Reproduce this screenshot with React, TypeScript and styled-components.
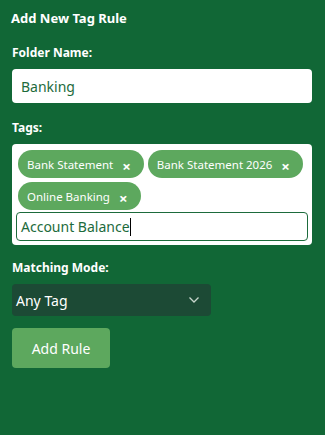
import * as React from 'react';
import styled, { createGlobalStyle } from 'styled-components';

const GlobalStyle = createGlobalStyle`
    html, body {
        margin: 0;
        padding: 0;
        background: #116736;
        font-family: "Noto Sans", "Open Sans", sans-serif;
    }
`;

const Panel = styled.div`
    width: 325px;
    height: 435px;
    box-sizing: border-box;
    padding: 9px 12px;
    background: #116736;
    color: #fff;
`;

const Title = styled.h3`
    margin: 0 0 18px -1px;
    font-size: 13px;
    font-weight: 700;
    line-height: 18px;
`;

const Label = styled.label`
    display: block;
    font-size: 12px;
    font-weight: 700;
    line-height: 16px;
    margin-bottom: 8px;
`;

const Field = styled.div<{ $gap?: number }>`
    margin-bottom: ${({ $gap }) => ($gap ?? 16)}px;
`;

const TextInput = styled.input`
    display: block;
    width: 300px;
    height: 34px;
    box-sizing: border-box;
    border: none;
    border-radius: 4px;
    padding: 0 9px;
    font-family: inherit;
    font-size: 14px;
    color: #1d6b3c;
    background: #fff;
    outline: none;
`;

const TagBox = styled.div`
    width: 300px;
    box-sizing: border-box;
    background: #fff;
    border-radius: 4px;
    padding: 6px 4px 4px 4px;
    display: flex;
    flex-wrap: wrap;
    column-gap: 2px;
    row-gap: 4px;
`;

const Chip = styled.span`
    display: inline-flex;
    align-items: center;
    height: 28px;
    box-sizing: border-box;
    margin-left: 2px;
    padding: 0 13px 0 9px;
    border-radius: 14px;
    background: #5da85e;
    color: #fff;
    font-size: 11.5px;
`;

const Remove = styled.span`
    margin-left: 9px;
    font-size: 15px;
    font-weight: 700;
    line-height: 1;
    padding-top: 4px;
`;

const TagInput = styled.div`
    width: 292px;
    height: 29px;
    margin-top: -2px;
    box-sizing: border-box;
    border: 1px solid #1d6b3c;
    border-radius: 4px;
    padding: 0 4px;
    display: flex;
    align-items: center;
    font-size: 14px;
    color: #1d6b3c;
`;

const Caret = styled.span`
    display: inline-block;
    width: 1px;
    height: 18px;
    background: #000;
`;

const Select = styled.div`
    width: 199px;
    height: 32px;
    box-sizing: border-box;
    border-radius: 4px;
    background: #1c4a35;
    padding: 0 11px 0 4px;
    display: flex;
    align-items: center;
    justify-content: space-between;
    font-size: 14px;
`;

const Button = styled.button`
    width: 98px;
    height: 40px;
    border: none;
    border-radius: 4px;
    background: #5da85e;
    color: #fff;
    font-family: inherit;
    font-size: 14px;
    cursor: pointer;
`;

const tags = ['Bank Statement', 'Bank Statement 2026', 'Online Banking'];

export default function App() {
    return (
        <>
            <GlobalStyle />
            <Panel>
                <Title>Add New Tag Rule</Title>
                <Field $gap={17}>
                    <Label>Folder Name:</Label>
                    <TextInput defaultValue="Banking" />
                </Field>
                <Field $gap={15}>
                    <Label>Tags:</Label>
                    <TagBox>
                        {tags.map(t => (
                            <Chip key={t}>
                                {t}
                                <Remove>×</Remove>
                            </Chip>
                        ))}
                        <TagInput>
                            Account Balance
                            <Caret />
                        </TagInput>
                    </TagBox>
                </Field>
                <Field $gap={12}>
                    <Label>Matching Mode:</Label>
                    <Select>
                        <span>Any Tag</span>
                        <svg width="12" height="8" viewBox="0 0 12 8">
                            <path d="M1.5 1.5 L6 6 L10.5 1.5" fill="none" stroke="#c8d6cd" strokeWidth="1.3" />
                        </svg>
                    </Select>
                </Field>
                <Button>Add Rule</Button>
            </Panel>
        </>
    );
}
